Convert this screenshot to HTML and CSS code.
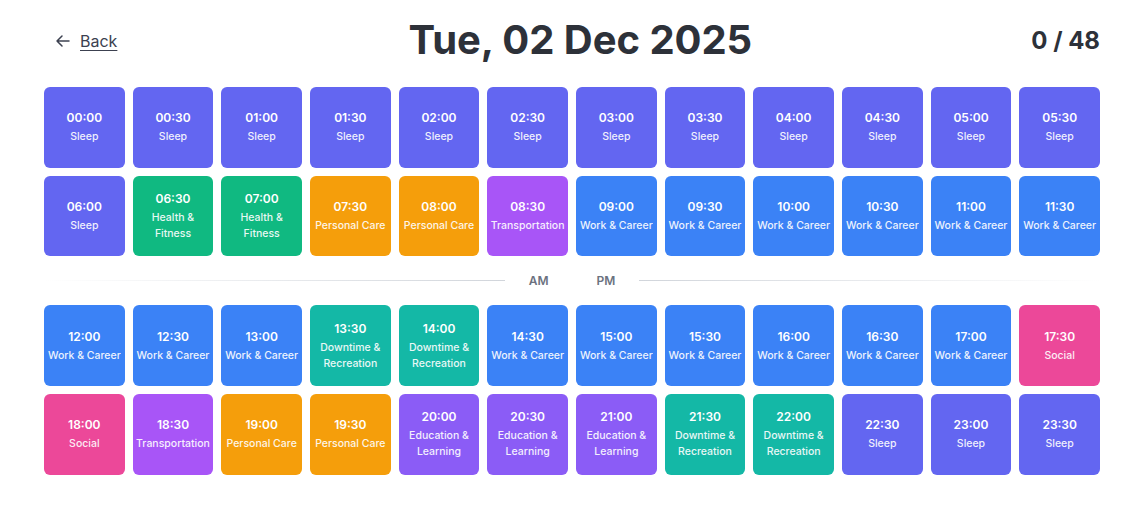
FILE: index.html
```html
<!DOCTYPE html>
<html lang="en">
<head>
<meta charset="utf-8">
<title>Tue, 02 Dec 2025</title>
<link rel="stylesheet" href="styles.css">
</head>
<body>
<div class="page">
  <header class="header">
    <a class="back" href="#">
      <svg class="back-icon" viewBox="0 0 24 24" width="16" height="16" fill="none" stroke="currentColor" stroke-width="2.25" stroke-linecap="round" stroke-linejoin="round"><path d="M10.5 19.5 3 12l7.5-7.5M3 12h18"/></svg>
      <span class="back-text">Back</span>
    </a>
    <h1 class="title">Tue, 02 Dec 2025</h1>
    <div class="count">0 / 48</div>
  </header>

  <div class="grid">
    <div class="tile sleep"><div class="time">00:00</div><div class="label">Sleep</div></div>
    <div class="tile sleep"><div class="time">00:30</div><div class="label">Sleep</div></div>
    <div class="tile sleep"><div class="time">01:00</div><div class="label">Sleep</div></div>
    <div class="tile sleep"><div class="time">01:30</div><div class="label">Sleep</div></div>
    <div class="tile sleep"><div class="time">02:00</div><div class="label">Sleep</div></div>
    <div class="tile sleep"><div class="time">02:30</div><div class="label">Sleep</div></div>
    <div class="tile sleep"><div class="time">03:00</div><div class="label">Sleep</div></div>
    <div class="tile sleep"><div class="time">03:30</div><div class="label">Sleep</div></div>
    <div class="tile sleep"><div class="time">04:00</div><div class="label">Sleep</div></div>
    <div class="tile sleep"><div class="time">04:30</div><div class="label">Sleep</div></div>
    <div class="tile sleep"><div class="time">05:00</div><div class="label">Sleep</div></div>
    <div class="tile sleep"><div class="time">05:30</div><div class="label">Sleep</div></div>

    <div class="tile sleep"><div class="time">06:00</div><div class="label">Sleep</div></div>
    <div class="tile health"><div class="time">06:30</div><div class="label">Health &amp; Fitness</div></div>
    <div class="tile health"><div class="time">07:00</div><div class="label">Health &amp; Fitness</div></div>
    <div class="tile care"><div class="time">07:30</div><div class="label">Personal Care</div></div>
    <div class="tile care"><div class="time">08:00</div><div class="label">Personal Care</div></div>
    <div class="tile transport"><div class="time">08:30</div><div class="label">Transportation</div></div>
    <div class="tile work"><div class="time">09:00</div><div class="label">Work &amp; Career</div></div>
    <div class="tile work"><div class="time">09:30</div><div class="label">Work &amp; Career</div></div>
    <div class="tile work"><div class="time">10:00</div><div class="label">Work &amp; Career</div></div>
    <div class="tile work"><div class="time">10:30</div><div class="label">Work &amp; Career</div></div>
    <div class="tile work"><div class="time">11:00</div><div class="label">Work &amp; Career</div></div>
    <div class="tile work"><div class="time">11:30</div><div class="label">Work &amp; Career</div></div>
  </div>

  <div class="divider">
    <span class="line line-left"></span>
    <span class="ampm">AM</span>
    <span class="ampm">PM</span>
    <span class="line line-right"></span>
  </div>

  <div class="grid">
    <div class="tile work"><div class="time">12:00</div><div class="label">Work &amp; Career</div></div>
    <div class="tile work"><div class="time">12:30</div><div class="label">Work &amp; Career</div></div>
    <div class="tile work"><div class="time">13:00</div><div class="label">Work &amp; Career</div></div>
    <div class="tile downtime"><div class="time">13:30</div><div class="label">Downtime &amp; Recreation</div></div>
    <div class="tile downtime"><div class="time">14:00</div><div class="label">Downtime &amp; Recreation</div></div>
    <div class="tile work"><div class="time">14:30</div><div class="label">Work &amp; Career</div></div>
    <div class="tile work"><div class="time">15:00</div><div class="label">Work &amp; Career</div></div>
    <div class="tile work"><div class="time">15:30</div><div class="label">Work &amp; Career</div></div>
    <div class="tile work"><div class="time">16:00</div><div class="label">Work &amp; Career</div></div>
    <div class="tile work"><div class="time">16:30</div><div class="label">Work &amp; Career</div></div>
    <div class="tile work"><div class="time">17:00</div><div class="label">Work &amp; Career</div></div>
    <div class="tile social"><div class="time">17:30</div><div class="label">Social</div></div>

    <div class="tile social"><div class="time">18:00</div><div class="label">Social</div></div>
    <div class="tile transport"><div class="time">18:30</div><div class="label">Transportation</div></div>
    <div class="tile care"><div class="time">19:00</div><div class="label">Personal Care</div></div>
    <div class="tile care"><div class="time">19:30</div><div class="label">Personal Care</div></div>
    <div class="tile education"><div class="time">20:00</div><div class="label">Education &amp; Learning</div></div>
    <div class="tile education"><div class="time">20:30</div><div class="label">Education &amp; Learning</div></div>
    <div class="tile education"><div class="time">21:00</div><div class="label">Education &amp; Learning</div></div>
    <div class="tile downtime"><div class="time">21:30</div><div class="label">Downtime &amp; Recreation</div></div>
    <div class="tile downtime"><div class="time">22:00</div><div class="label">Downtime &amp; Recreation</div></div>
    <div class="tile sleep"><div class="time">22:30</div><div class="label">Sleep</div></div>
    <div class="tile sleep"><div class="time">23:00</div><div class="label">Sleep</div></div>
    <div class="tile sleep"><div class="time">23:30</div><div class="label">Sleep</div></div>
  </div>
</div>
</body>
</html>
```

FILE: styles.css
```css
* { box-sizing: border-box; }
html, body { margin: 0; padding: 0; background: #ffffff; }
body {
  font-family: Inter, "Noto Sans", "Liberation Sans", sans-serif;
  color: #2d3139;
}
.page {
  width: 1144px;
  padding: 16px 44px 0 44px;
}
.header {
  display: flex;
  align-items: center;
  justify-content: space-between;
  height: 48px;
  margin-bottom: 23px;
}
.back {
  display: flex;
  align-items: center;
  gap: 9px;
  padding: 0 12px;
  color: #3c4150;
  text-decoration: none;
  font-size: 16px;
  line-height: 24px;
  margin-top: 2px;
}
.back-icon { display: block; margin-left: -1px; }
.back-text {
  text-decoration: underline;
  text-underline-offset: 3px;
  text-decoration-thickness: 1px;
}
.title {
  margin: 0;
  font-size: 40px;
  font-weight: 700;
  line-height: 48px;
  color: #2d3139;
  letter-spacing: -0.05px;
}
.count {
  font-size: 24px;
  font-weight: 700;
  line-height: 32px;
  color: #2d3139;
  margin-top: 2px;
}
.grid {
  display: grid;
  grid-template-columns: repeat(12, minmax(0, 1fr));
  gap: 8px;
}
.tile {
  aspect-ratio: 1 / 1;
  min-width: 0;
  border-radius: 6px;
  display: flex;
  flex-direction: column;
  align-items: center;
  justify-content: center;
  text-align: center;
  color: #ffffff;
  padding: 0 3px;
  overflow: hidden;
}
.time {
  font-size: 12px;
  font-weight: 600;
  line-height: 18px;
}
.label {
  margin-top: 2px;
  font-size: 10.5px;
  font-weight: 500;
  line-height: 16px;
  opacity: 0.9;
}
.sleep { background: #6366f1; }
.health { background: #10b981; }
.care { background: #f59e0b; }
.transport { background: #a855f7; }
.work { background: #3b82f6; }
.downtime { background: #14b8a6; }
.social { background: #ec4899; }
.education { background: #8b5cf6; }

.divider {
  display: flex;
  align-items: center;
  height: 16px;
  margin: 16.5px 0;
}
.line {
  flex: 1;
  height: 1px;
}
.line-left {
  background: linear-gradient(to right, rgba(209, 213, 219, 0), #d1d5db);
  margin-right: 24px;
}
.line-right {
  background: linear-gradient(to left, rgba(209, 213, 219, 0), #d1d5db);
  margin-left: 24px;
}
.ampm {
  font-size: 12px;
  font-weight: 600;
  line-height: 16px;
  color: #6b7280;
}
.ampm + .ampm { margin-left: 48px; }
```
